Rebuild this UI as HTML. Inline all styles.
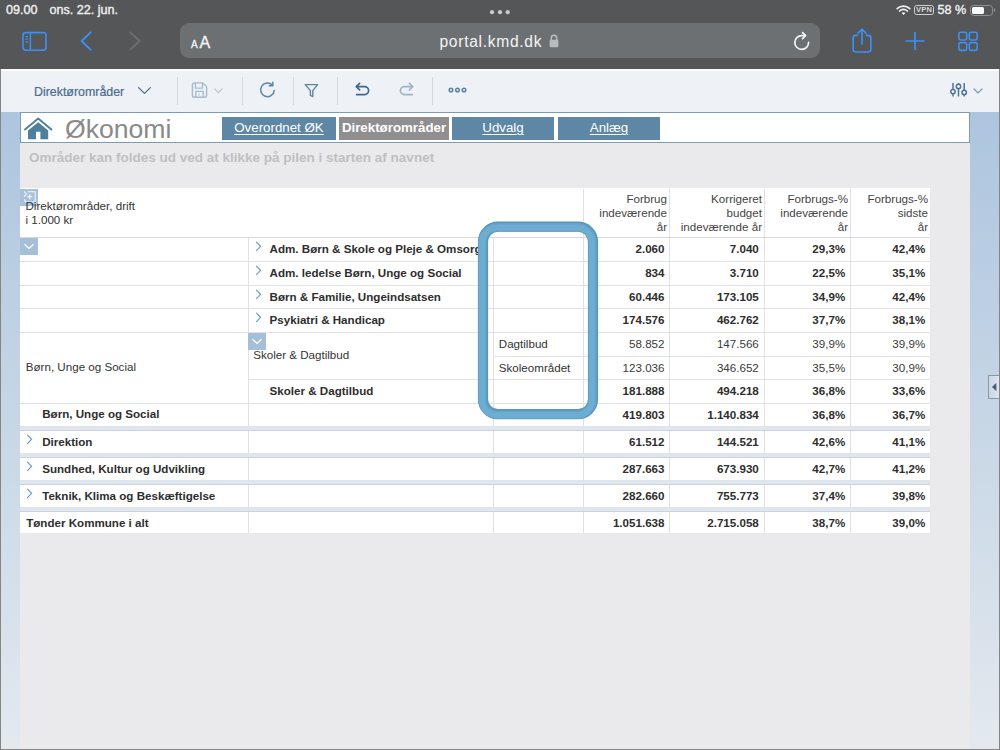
<!DOCTYPE html>
<html><head><meta charset="utf-8">
<style>
*{box-sizing:border-box}
html,body{margin:0;padding:0}
body{width:1000px;height:750px;overflow:hidden;position:relative;background:#545658;font-family:"Liberation Sans",sans-serif}
.a{position:absolute}
.t{position:absolute;white-space:nowrap;line-height:14px}
.st{position:absolute;color:#f2f2f2;font-size:12.6px;top:3px;line-height:14px;white-space:nowrap;-webkit-text-stroke:0.35px #f2f2f2}
#url{left:180px;top:23px;width:640px;height:35px;border-radius:9px;background:#6d7072}
#web{left:0;top:69px;width:1000px;height:681px;background:#eef2f7;border-left:1px solid #858585;border-right:1px solid #858585;border-bottom:1px solid #858585}
#tbl{left:1px;top:69px;width:998px;height:2px;background:#f9fbfd}
.sep{position:absolute;top:77px;width:1px;height:28px;background:#d3d9e1}
#lsb{left:1px;top:112px;width:19px;height:637px;background:linear-gradient(#adc5df,#c5d5e5 45%,#e3e9ef)}
#rsb{left:970px;top:112px;width:29px;height:637px;background:linear-gradient(#adc5df,#c5d5e5 45%,#e3e9ef)}
#main{left:20px;top:112px;width:950px;height:637px;background:#eaeaec}
#hdr{left:20px;top:112px;width:950px;height:31px;background:#fff;border:1.6px solid #7b9cb6}
.tab{position:absolute;top:117px;height:23px;background:#5e87a5;color:#fff;font-size:13.3px;text-align:center;line-height:22px;white-space:nowrap}
.tab u{text-decoration:underline;text-underline-offset:2px;text-decoration-thickness:1px}
#ins{left:29px;top:149.6px;color:#bfbfc1;font-size:13.5px;font-weight:bold;white-space:nowrap;line-height:16px}
</style></head><body>
<div class="st" style="left:6px">09.00</div>
<div class="st" style="left:49.5px">ons. 22. jun.</div>
<div class="st" style="left:937.5px">58 %</div>
<div id="url" class="a"></div>
<div class="a" style="left:439.5px;top:32px;color:#f4f4f4;font-size:15.6px;line-height:20px;white-space:nowrap;letter-spacing:0.7px">portal.kmd.dk</div>

<div id="web" class="a"></div>
<div id="tbl" class="a"></div>
<div class="a" style="left:34px;top:83.5px;color:#4a6c8e;font-size:12.4px;line-height:16px;-webkit-text-stroke:0.2px #4a6c8e">Direktørområder</div>
<div class="sep" style="left:177px"></div>
<div class="sep" style="left:242px"></div>
<div class="sep" style="left:293px"></div>
<div class="sep" style="left:337px"></div>
<div class="sep" style="left:432px"></div>
<div id="lsb" class="a"></div>
<div id="rsb" class="a"></div>
<div id="main" class="a"></div>
<div id="hdr" class="a"></div>
<div class="a" style="left:65px;top:114px;color:#8a8a8a;font-size:26.6px;line-height:30px">Økonomi</div>
<div class="tab" style="left:222px;width:114px"><u>Overordnet ØK</u></div>
<div class="tab" style="left:339px;width:110px;background:#8f8f8f;font-weight:bold">Direktørområder</div>
<div class="tab" style="left:452px;width:102px"><u>Udvalg</u></div>
<div class="tab" style="left:558px;width:102px"><u>Anlæg</u></div>
<div id="ins" class="a">Områder kan foldes ud ved at klikke på pilen i starten af navnet</div>

<!-- status bar extras -->
<svg class="a" style="left:488px;top:8px" width="24" height="8" viewBox="0 0 24 8"><circle cx="4" cy="4.2" r="2.1" fill="#c9cacb"/><circle cx="12" cy="4.2" r="2.1" fill="#c9cacb"/><circle cx="19.7" cy="4.2" r="2.1" fill="#c9cacb"/></svg>
<svg class="a" style="left:896px;top:4px" width="15" height="12" viewBox="0 0 15 12"><path d="M1.2 4.6 A9 9 0 0 1 13.8 4.6" fill="none" stroke="#f2f2f2" stroke-width="1.7" stroke-linecap="round"/><path d="M3.6 7 A5.6 5.6 0 0 1 11.4 7" fill="none" stroke="#f2f2f2" stroke-width="1.7" stroke-linecap="round"/><path d="M5.6 9.1 L7.5 11.1 L9.4 9.1 A2.7 2.7 0 0 0 5.6 9.1Z" fill="#f2f2f2"/></svg>
<div class="a" style="left:914px;top:5px;width:20px;height:10px;border:1.2px solid #d0d0d0;border-radius:2.5px"></div>
<div class="a" style="left:914px;top:5px;width:20px;line-height:10px;font-size:7.5px;font-weight:bold;color:#d8d8d8;text-align:center;letter-spacing:0.2px">VPN</div>
<div class="a" style="left:969.5px;top:4.5px;width:23px;height:11px;border:1.2px solid #8e9091;border-radius:3.5px"></div>
<div class="a" style="left:971.5px;top:6.5px;width:12px;height:7px;background:#fafafa;border-radius:1.5px"></div>
<div class="a" style="left:993.5px;top:8.3px;width:1.5px;height:3.8px;background:#8e9091;border-radius:0 1px 1px 0"></div>
<!-- safari bar icons -->
<svg class="a" style="left:20px;top:30px" width="30" height="24" viewBox="0 0 30 24"><rect x="3" y="2.6" width="23" height="17.6" rx="2.6" fill="none" stroke="#3f8ef2" stroke-width="1.6"/><path d="M10.4 2.6 V20.2" stroke="#3f8ef2" stroke-width="1.5"/><path d="M5.5 6.6 H8 M5.5 9.2 H8 M5.5 11.8 H8" stroke="#3f8ef2" stroke-width="1.2"/></svg>
<svg class="a" style="left:78px;top:30px" width="16" height="22" viewBox="0 0 16 22"><path d="M12.6 2.4 L3.6 11 L12.6 19.6" fill="none" stroke="#3f8ef2" stroke-width="2" stroke-linecap="round" stroke-linejoin="round"/></svg>
<svg class="a" style="left:127px;top:30px" width="16" height="22" viewBox="0 0 16 22"><path d="M3.4 2.4 L12.4 11 L3.4 19.6" fill="none" stroke="#6c6e70" stroke-width="2" stroke-linecap="round" stroke-linejoin="round"/></svg>
<div class="a" style="left:191px;top:38.5px;font-size:10px;line-height:12px;color:#f5f5f5;-webkit-text-stroke:0.3px #f5f5f5">A</div>
<div class="a" style="left:199.5px;top:33.5px;font-size:16px;line-height:18px;color:#f5f5f5;-webkit-text-stroke:0.3px #f5f5f5">A</div>
<svg class="a" style="left:548px;top:33px" width="12" height="16" viewBox="0 0 12 16"><path d="M3.3 7 V5 A2.7 2.7 0 0 1 8.7 5 V7" fill="none" stroke="#b9babd" stroke-width="1.5"/><rect x="1.6" y="6.8" width="8.8" height="7.4" rx="1.3" fill="#b9babd"/></svg>
<svg class="a" style="left:793px;top:30px" width="20" height="22" viewBox="0 0 20 22"><path d="M15.6 12.3 A6.9 6.9 0 1 1 9.2 5.6 L11.8 5.6" fill="none" stroke="#f4f4f4" stroke-width="1.7" stroke-linecap="round"/><path d="M9.6 2.6 L12.6 5.6 L9.6 8.6" fill="none" stroke="#f4f4f4" stroke-width="1.7" stroke-linecap="round" stroke-linejoin="round"/></svg>
<svg class="a" style="left:850px;top:27px" width="24" height="28" viewBox="0 0 24 28"><path d="M8.2 8.4 H5.6 A2.4 2.4 0 0 0 3.2 10.8 V22.6 A2.4 2.4 0 0 0 5.6 25 H18.4 A2.4 2.4 0 0 0 20.8 22.6 V10.8 A2.4 2.4 0 0 0 18.4 8.4 H15.8" fill="none" stroke="#3f8ef2" stroke-width="1.7"/><path d="M12 17 V2.6 M8 6.2 L12 2.2 L16 6.2" fill="none" stroke="#3f8ef2" stroke-width="1.7" stroke-linecap="round" stroke-linejoin="round"/></svg>
<svg class="a" style="left:904px;top:30px" width="22" height="22" viewBox="0 0 22 22"><path d="M11 2.5 V19.5 M2.2 11 H19.8" stroke="#3f8ef2" stroke-width="1.7" stroke-linecap="round"/></svg>
<svg class="a" style="left:956px;top:29px" width="24" height="24" viewBox="0 0 24 24"><rect x="2.9" y="3.2" width="7.8" height="7.8" rx="1.6" fill="none" stroke="#3f8ef2" stroke-width="1.6"/><rect x="13.3" y="3.2" width="7.8" height="7.8" rx="1.6" fill="none" stroke="#3f8ef2" stroke-width="1.6"/><rect x="2.9" y="13.6" width="7.8" height="7.8" rx="1.6" fill="none" stroke="#3f8ef2" stroke-width="1.6"/><rect x="13.3" y="13.6" width="7.8" height="7.8" rx="1.6" fill="none" stroke="#3f8ef2" stroke-width="1.6"/></svg>

<!-- toolbar icons -->
<svg class="a" style="left:136px;top:84px" width="17" height="12" viewBox="0 0 17 12"><path d="M2.6 3.6 L8.5 9.4 L14.4 3.6" fill="none" stroke="#4a6c8e" stroke-width="1.3" stroke-linecap="round" stroke-linejoin="round"/></svg>
<svg class="a" style="left:190px;top:81px" width="19" height="18" viewBox="0 0 19 18"><path d="M4.6 1.9 H12.6 L16.6 5.6 V14.4 A1.8 1.8 0 0 1 14.8 16.2 H4.2 A1.8 1.8 0 0 1 2.4 14.4 V3.7 A1.8 1.8 0 0 1 4.2 1.9Z" fill="none" stroke="#a7b9cf" stroke-width="1.4"/><path d="M5.4 2 V7.2 H12.4 V2" fill="none" stroke="#a7b9cf" stroke-width="1.3"/><path d="M5.8 16.2 V10.4 H13.2 V16.2" fill="none" stroke="#a7b9cf" stroke-width="1.3"/><path d="M9 12.6 V14.6" stroke="#a7b9cf" stroke-width="1"/></svg>
<svg class="a" style="left:213px;top:87px" width="11" height="8" viewBox="0 0 11 8"><path d="M1.8 1.8 L5.5 5.6 L9.2 1.8" fill="none" stroke="#b3c2d3" stroke-width="1.1" stroke-linecap="round"/></svg>
<svg class="a" style="left:258px;top:80px" width="19" height="20" viewBox="0 0 19 20"><path d="M14.4 5.2 A6.8 6.8 0 1 0 16.2 10.6" fill="none" stroke="#5d84a9" stroke-width="1.5" stroke-linecap="round"/><path d="M14.8 2.2 V5.8 H11.2" fill="none" stroke="#5d84a9" stroke-width="1.5" stroke-linecap="round" stroke-linejoin="round"/></svg>
<svg class="a" style="left:303px;top:82px" width="17" height="17" viewBox="0 0 17 17"><path d="M2.2 2.6 H14.6 L9.8 8.6 V14.6 L7.4 13.4 V8.6 Z" fill="none" stroke="#5d84a9" stroke-width="1.4" stroke-linejoin="round"/></svg>
<svg class="a" style="left:354px;top:81px" width="18" height="18" viewBox="0 0 18 18"><path d="M5.6 2.3 L2.3 5.6 L5.6 8.9" fill="none" stroke="#3b6893" stroke-width="1.7" stroke-linecap="round" stroke-linejoin="round"/><path d="M2.6 5.6 H10.6 A4 4 0 0 1 10.6 13.6 H2.6" fill="none" stroke="#3b6893" stroke-width="1.7" stroke-linecap="round"/><path d="M2.4 15.2 H12.4" stroke="#3b6893" stroke-width="0" /></svg>
<svg class="a" style="left:397px;top:81px" width="18" height="18" viewBox="0 0 18 18"><path d="M12.4 2.3 L15.7 5.6 L12.4 8.9" fill="none" stroke="#9cb4cb" stroke-width="1.7" stroke-linecap="round" stroke-linejoin="round"/><path d="M15.4 5.6 H7.4 A4 4 0 0 0 7.4 13.6 H15.4" fill="none" stroke="#9cb4cb" stroke-width="1.7" stroke-linecap="round"/></svg>
<svg class="a" style="left:447px;top:85px" width="21" height="10" viewBox="0 0 21 10"><circle cx="4" cy="5" r="1.8" fill="none" stroke="#5a80a5" stroke-width="1.5"/><circle cx="10.5" cy="5" r="1.8" fill="none" stroke="#5a80a5" stroke-width="1.5"/><circle cx="17" cy="5" r="1.8" fill="none" stroke="#5a80a5" stroke-width="1.5"/></svg>
<svg class="a" style="left:948px;top:81px" width="21" height="18" viewBox="0 0 21 18"><path d="M5 2 V15.6 M10.5 2 V15.6 M16.2 2 V15.6" stroke="#4d7399" stroke-width="1.5"/><circle cx="5" cy="10.6" r="2.2" fill="#eef2f7" stroke="#4d7399" stroke-width="1.5"/><circle cx="10.5" cy="5.5" r="2.2" fill="#eef2f7" stroke="#4d7399" stroke-width="1.5"/><circle cx="16.2" cy="11.5" r="2.2" fill="#eef2f7" stroke="#4d7399" stroke-width="1.5"/></svg>
<svg class="a" style="left:972px;top:86px" width="12" height="9" viewBox="0 0 12 9"><path d="M2 3 L6 7 L10 3" fill="none" stroke="#7b97b4" stroke-width="1.2" stroke-linecap="round"/></svg>
<!-- house -->
<svg class="a" style="left:22px;top:114px" width="34" height="28" viewBox="22 114 34 28"><path d="M25 129.6 L38.2 118.6 L51.4 129.6" fill="none" stroke="#4e7f9c" stroke-width="1.9" stroke-linecap="round" stroke-linejoin="round"/><path d="M28 130.4 L38.2 122.2 L48.2 130.4 V139.2 H40.4 V131.8 H36 V139.2 H28Z" fill="#4e7f9c"/></svg>
<!-- right sidebar handle -->
<div class="a" style="left:988px;top:375px;width:11px;height:24px;background:linear-gradient(90deg,#c9d6e4,#dfe7ef);border:1px solid #8b98a6;border-right:none"></div>
<svg class="a" style="left:988px;top:375px" width="11" height="24" viewBox="0 0 11 24"><path d="M4 12 L8.4 7.8 V16.2Z" fill="#4a5a70"/></svg>
<div class="a" style="left:20px;top:188px;width:910px;height:345px;background:#fff"></div>
<div class="a" style="left:20px;top:189px;width:18px;height:17px;background:#a8c1db"></div><svg class="a" style="left:20px;top:189px" width="18" height="17" viewBox="0 0 18 17"><path d="M4 2.4 L6.6 5 L4 7.6" fill="none" stroke="#eef3f8" stroke-width="1.1"/><path d="M7.6 2.8 H15.2 V13 H7.4 M4.6 10.2 A2.8 2.8 0 0 0 7.4 13" fill="none" stroke="#eef3f8" stroke-width="1.1"/><path d="M9.7 5.2 V10.2 M7.2 7.7 H12.2" stroke="#eef3f8" stroke-width="1.3"/></svg>
<div class="a" style="left:583px;top:189px;width:1px;height:48px;background:#e1e1e1"></div>
<div class="a" style="left:669px;top:189px;width:1px;height:48px;background:#e1e1e1"></div>
<div class="a" style="left:764px;top:189px;width:1px;height:48px;background:#e1e1e1"></div>
<div class="a" style="left:850px;top:189px;width:1px;height:48px;background:#e1e1e1"></div>
<div class="t" style="left:25.5px;top:198.6px;font-size:11.6px;color:#333;">Direktørområder, drift</div>
<div class="t" style="left:25.5px;top:212.8px;font-size:11.6px;color:#333;">i 1.000 kr</div>
<div class="t" style="left:572px;width:95px;text-align:right;top:192.1px;font-size:11.6px;color:#444;">Forbrug</div>
<div class="t" style="left:572px;width:95px;text-align:right;top:206.1px;font-size:11.6px;color:#444;">indeværende</div>
<div class="t" style="left:572px;width:95px;text-align:right;top:220.1px;font-size:11.6px;color:#444;">år</div>
<div class="t" style="left:667px;width:95px;text-align:right;top:192.1px;font-size:11.6px;color:#444;">Korrigeret</div>
<div class="t" style="left:667px;width:95px;text-align:right;top:206.1px;font-size:11.6px;color:#444;">budget</div>
<div class="t" style="left:667px;width:95px;text-align:right;top:220.1px;font-size:11.6px;color:#444;">indeværende år</div>
<div class="t" style="left:753px;width:95px;text-align:right;top:192.1px;font-size:11.6px;color:#444;">Forbrugs-%</div>
<div class="t" style="left:753px;width:95px;text-align:right;top:206.1px;font-size:11.6px;color:#444;">indeværende</div>
<div class="t" style="left:753px;width:95px;text-align:right;top:220.1px;font-size:11.6px;color:#444;">år</div>
<div class="t" style="left:833px;width:95px;text-align:right;top:192.1px;font-size:11.6px;color:#444;">Forbrugs-%</div>
<div class="t" style="left:833px;width:95px;text-align:right;top:206.1px;font-size:11.6px;color:#444;">sidste</div>
<div class="t" style="left:833px;width:95px;text-align:right;top:220.1px;font-size:11.6px;color:#444;">år</div>
<div class="a" style="left:20px;top:237px;width:910px;height:1px;background:#d9d7e7"></div>
<div class="a" style="left:20px;top:261px;width:910px;height:1px;background:#e1e1e1"></div>
<div class="a" style="left:20px;top:285px;width:910px;height:1px;background:#e1e1e1"></div>
<div class="a" style="left:20px;top:308px;width:910px;height:1px;background:#e1e1e1"></div>
<div class="a" style="left:20px;top:332px;width:910px;height:1px;background:#e1e1e1"></div>
<div class="a" style="left:493px;top:356px;width:437px;height:1px;background:#e1e1e1"></div>
<div class="a" style="left:248px;top:379px;width:682px;height:1px;background:#e1e1e1"></div>
<div class="a" style="left:20px;top:403px;width:910px;height:1px;background:#e1e1e1"></div>
<div class="a" style="left:248px;top:238px;width:1px;height:189px;background:#e1e1e1"></div>
<div class="a" style="left:493px;top:238px;width:1px;height:189px;background:#e1e1e1"></div>
<div class="a" style="left:583px;top:238px;width:1px;height:189px;background:#e1e1e1"></div>
<div class="a" style="left:669px;top:238px;width:1px;height:189px;background:#e1e1e1"></div>
<div class="a" style="left:764px;top:238px;width:1px;height:189px;background:#e1e1e1"></div>
<div class="a" style="left:850px;top:238px;width:1px;height:189px;background:#e1e1e1"></div>
<svg class="a" style="left:254.5px;top:241px" width="7" height="11" viewBox="0 0 7 11"><path d="M1.2 0.8 L5.6 5.3 L1.2 9.8" fill="none" stroke="#6d9bc6" stroke-width="1.2"/></svg>
<div class="t" style="left:269.6px;top:242.0px;font-size:11.6px;color:#2e2e2e;font-weight:bold;">Adm. Børn &amp; Skole og Pleje &amp; Omsorg</div>
<svg class="a" style="left:254.5px;top:265px" width="7" height="11" viewBox="0 0 7 11"><path d="M1.2 0.8 L5.6 5.3 L1.2 9.8" fill="none" stroke="#6d9bc6" stroke-width="1.2"/></svg>
<div class="t" style="left:269.6px;top:266.0px;font-size:11.6px;color:#2e2e2e;font-weight:bold;">Adm. ledelse Børn, Unge og Social</div>
<svg class="a" style="left:254.5px;top:289px" width="7" height="11" viewBox="0 0 7 11"><path d="M1.2 0.8 L5.6 5.3 L1.2 9.8" fill="none" stroke="#6d9bc6" stroke-width="1.2"/></svg>
<div class="t" style="left:269.6px;top:290.0px;font-size:11.6px;color:#2e2e2e;font-weight:bold;">Børn &amp; Familie, Ungeindsatsen</div>
<svg class="a" style="left:254.5px;top:312px" width="7" height="11" viewBox="0 0 7 11"><path d="M1.2 0.8 L5.6 5.3 L1.2 9.8" fill="none" stroke="#6d9bc6" stroke-width="1.2"/></svg>
<div class="t" style="left:269.6px;top:313.0px;font-size:11.6px;color:#2e2e2e;font-weight:bold;">Psykiatri &amp; Handicap</div>
<div class="a" style="left:20px;top:238px;width:18px;height:17px;background:#a6bfd8"></div><svg class="a" style="left:20px;top:238px" width="18" height="17" viewBox="0 0 18 17"><path d="M4.5 6.2 L9 10.4 L13.5 6.2" fill="none" stroke="#fff" stroke-width="1.2"/></svg>
<div class="a" style="left:248px;top:333px;width:18px;height:17px;background:#a6bfd8"></div><svg class="a" style="left:248px;top:333px" width="18" height="17" viewBox="0 0 18 17"><path d="M4.5 6.2 L9 10.4 L13.5 6.2" fill="none" stroke="#fff" stroke-width="1.2"/></svg>
<div class="t" style="left:25.8px;top:360.0px;font-size:11.6px;color:#333;">Børn, Unge og Social</div>
<div class="t" style="left:253.2px;top:348.2px;font-size:11.6px;color:#333;">Skoler &amp; Dagtilbud</div>
<div class="t" style="left:269.6px;top:384.4px;font-size:11.6px;color:#2e2e2e;font-weight:bold;">Skoler &amp; Dagtilbud</div>
<div class="t" style="left:42.2px;top:407.4px;font-size:11.6px;color:#2e2e2e;font-weight:bold;">Børn, Unge og Social</div>
<div class="t" style="left:498.8px;top:336.9px;font-size:11.6px;color:#333;">Dagtilbud</div>
<div class="t" style="left:498.8px;top:361.0px;font-size:11.6px;color:#333;">Skoleområdet</div>
<div class="t" style="left:579.5px;width:85px;text-align:right;top:241.6px;font-size:11.6px;color:#2e2e2e;font-weight:bold;">2.060</div>
<div class="t" style="left:673.8px;width:85px;text-align:right;top:241.6px;font-size:11.6px;color:#2e2e2e;font-weight:bold;">7.040</div>
<div class="t" style="left:760.2px;width:85px;text-align:right;top:241.6px;font-size:11.6px;color:#2e2e2e;font-weight:bold;">29,3%</div>
<div class="t" style="left:840.2px;width:85px;text-align:right;top:241.6px;font-size:11.6px;color:#2e2e2e;font-weight:bold;">42,4%</div>
<div class="t" style="left:579.5px;width:85px;text-align:right;top:265.6px;font-size:11.6px;color:#2e2e2e;font-weight:bold;">834</div>
<div class="t" style="left:673.8px;width:85px;text-align:right;top:265.6px;font-size:11.6px;color:#2e2e2e;font-weight:bold;">3.710</div>
<div class="t" style="left:760.2px;width:85px;text-align:right;top:265.6px;font-size:11.6px;color:#2e2e2e;font-weight:bold;">22,5%</div>
<div class="t" style="left:840.2px;width:85px;text-align:right;top:265.6px;font-size:11.6px;color:#2e2e2e;font-weight:bold;">35,1%</div>
<div class="t" style="left:579.5px;width:85px;text-align:right;top:289.6px;font-size:11.6px;color:#2e2e2e;font-weight:bold;">60.446</div>
<div class="t" style="left:673.8px;width:85px;text-align:right;top:289.6px;font-size:11.6px;color:#2e2e2e;font-weight:bold;">173.105</div>
<div class="t" style="left:760.2px;width:85px;text-align:right;top:289.6px;font-size:11.6px;color:#2e2e2e;font-weight:bold;">34,9%</div>
<div class="t" style="left:840.2px;width:85px;text-align:right;top:289.6px;font-size:11.6px;color:#2e2e2e;font-weight:bold;">42,4%</div>
<div class="t" style="left:579.5px;width:85px;text-align:right;top:312.6px;font-size:11.6px;color:#2e2e2e;font-weight:bold;">174.576</div>
<div class="t" style="left:673.8px;width:85px;text-align:right;top:312.6px;font-size:11.6px;color:#2e2e2e;font-weight:bold;">462.762</div>
<div class="t" style="left:760.2px;width:85px;text-align:right;top:312.6px;font-size:11.6px;color:#2e2e2e;font-weight:bold;">37,7%</div>
<div class="t" style="left:840.2px;width:85px;text-align:right;top:312.6px;font-size:11.6px;color:#2e2e2e;font-weight:bold;">38,1%</div>
<div class="t" style="left:579.5px;width:85px;text-align:right;top:336.6px;font-size:11.6px;color:#3a3a3a;">58.852</div>
<div class="t" style="left:673.8px;width:85px;text-align:right;top:336.6px;font-size:11.6px;color:#3a3a3a;">147.566</div>
<div class="t" style="left:760.2px;width:85px;text-align:right;top:336.6px;font-size:11.6px;color:#3a3a3a;">39,9%</div>
<div class="t" style="left:840.2px;width:85px;text-align:right;top:336.6px;font-size:11.6px;color:#3a3a3a;">39,9%</div>
<div class="t" style="left:579.5px;width:85px;text-align:right;top:360.6px;font-size:11.6px;color:#3a3a3a;">123.036</div>
<div class="t" style="left:673.8px;width:85px;text-align:right;top:360.6px;font-size:11.6px;color:#3a3a3a;">346.652</div>
<div class="t" style="left:760.2px;width:85px;text-align:right;top:360.6px;font-size:11.6px;color:#3a3a3a;">35,5%</div>
<div class="t" style="left:840.2px;width:85px;text-align:right;top:360.6px;font-size:11.6px;color:#3a3a3a;">30,9%</div>
<div class="t" style="left:579.5px;width:85px;text-align:right;top:383.6px;font-size:11.6px;color:#2e2e2e;font-weight:bold;">181.888</div>
<div class="t" style="left:673.8px;width:85px;text-align:right;top:383.6px;font-size:11.6px;color:#2e2e2e;font-weight:bold;">494.218</div>
<div class="t" style="left:760.2px;width:85px;text-align:right;top:383.6px;font-size:11.6px;color:#2e2e2e;font-weight:bold;">36,8%</div>
<div class="t" style="left:840.2px;width:85px;text-align:right;top:383.6px;font-size:11.6px;color:#2e2e2e;font-weight:bold;">33,6%</div>
<div class="t" style="left:579.5px;width:85px;text-align:right;top:407.6px;font-size:11.6px;color:#2e2e2e;font-weight:bold;">419.803</div>
<div class="t" style="left:673.8px;width:85px;text-align:right;top:407.6px;font-size:11.6px;color:#2e2e2e;font-weight:bold;">1.140.834</div>
<div class="t" style="left:760.2px;width:85px;text-align:right;top:407.6px;font-size:11.6px;color:#2e2e2e;font-weight:bold;">36,8%</div>
<div class="t" style="left:840.2px;width:85px;text-align:right;top:407.6px;font-size:11.6px;color:#2e2e2e;font-weight:bold;">36,7%</div>
<div class="a" style="left:20px;top:426px;width:910px;height:1px;background:#e3e3e6"></div>
<div class="a" style="left:20px;top:427px;width:910px;height:3px;background:#dde7ef"></div>
<div class="a" style="left:20px;top:430px;width:910px;height:1px;background:#cfd0e1"></div>
<div class="a" style="left:20px;top:453px;width:910px;height:1px;background:#e3e3e6"></div>
<div class="a" style="left:20px;top:454px;width:910px;height:3px;background:#dde7ef"></div>
<div class="a" style="left:20px;top:457px;width:910px;height:1px;background:#cfd0e1"></div>
<div class="a" style="left:248px;top:431px;width:1px;height:22px;background:#e1e1e1"></div>
<div class="a" style="left:493px;top:431px;width:1px;height:22px;background:#e1e1e1"></div>
<div class="a" style="left:583px;top:431px;width:1px;height:22px;background:#e1e1e1"></div>
<div class="a" style="left:669px;top:431px;width:1px;height:22px;background:#e1e1e1"></div>
<div class="a" style="left:764px;top:431px;width:1px;height:22px;background:#e1e1e1"></div>
<div class="a" style="left:850px;top:431px;width:1px;height:22px;background:#e1e1e1"></div>
<svg class="a" style="left:26px;top:434px" width="7" height="11" viewBox="0 0 7 11"><path d="M1.2 0.8 L5.6 5.3 L1.2 9.8" fill="none" stroke="#6d9bc6" stroke-width="1.2"/></svg>
<div class="t" style="left:42.2px;top:434.5px;font-size:11.6px;color:#2e2e2e;font-weight:bold;">Direktion</div>
<div class="t" style="left:579.5px;width:85px;text-align:right;top:434.5px;font-size:11.6px;color:#2e2e2e;font-weight:bold;">61.512</div>
<div class="t" style="left:673.8px;width:85px;text-align:right;top:434.5px;font-size:11.6px;color:#2e2e2e;font-weight:bold;">144.521</div>
<div class="t" style="left:760.2px;width:85px;text-align:right;top:434.5px;font-size:11.6px;color:#2e2e2e;font-weight:bold;">42,6%</div>
<div class="t" style="left:840.2px;width:85px;text-align:right;top:434.5px;font-size:11.6px;color:#2e2e2e;font-weight:bold;">41,1%</div>
<div class="a" style="left:20px;top:480px;width:910px;height:1px;background:#e3e3e6"></div>
<div class="a" style="left:20px;top:481px;width:910px;height:3px;background:#dde7ef"></div>
<div class="a" style="left:20px;top:484px;width:910px;height:1px;background:#cfd0e1"></div>
<div class="a" style="left:248px;top:458px;width:1px;height:22px;background:#e1e1e1"></div>
<div class="a" style="left:493px;top:458px;width:1px;height:22px;background:#e1e1e1"></div>
<div class="a" style="left:583px;top:458px;width:1px;height:22px;background:#e1e1e1"></div>
<div class="a" style="left:669px;top:458px;width:1px;height:22px;background:#e1e1e1"></div>
<div class="a" style="left:764px;top:458px;width:1px;height:22px;background:#e1e1e1"></div>
<div class="a" style="left:850px;top:458px;width:1px;height:22px;background:#e1e1e1"></div>
<svg class="a" style="left:26px;top:461px" width="7" height="11" viewBox="0 0 7 11"><path d="M1.2 0.8 L5.6 5.3 L1.2 9.8" fill="none" stroke="#6d9bc6" stroke-width="1.2"/></svg>
<div class="t" style="left:42.2px;top:461.5px;font-size:11.6px;color:#2e2e2e;font-weight:bold;">Sundhed, Kultur og Udvikling</div>
<div class="t" style="left:579.5px;width:85px;text-align:right;top:461.5px;font-size:11.6px;color:#2e2e2e;font-weight:bold;">287.663</div>
<div class="t" style="left:673.8px;width:85px;text-align:right;top:461.5px;font-size:11.6px;color:#2e2e2e;font-weight:bold;">673.930</div>
<div class="t" style="left:760.2px;width:85px;text-align:right;top:461.5px;font-size:11.6px;color:#2e2e2e;font-weight:bold;">42,7%</div>
<div class="t" style="left:840.2px;width:85px;text-align:right;top:461.5px;font-size:11.6px;color:#2e2e2e;font-weight:bold;">41,2%</div>
<div class="a" style="left:20px;top:507px;width:910px;height:1px;background:#e3e3e6"></div>
<div class="a" style="left:20px;top:508px;width:910px;height:3px;background:#dde7ef"></div>
<div class="a" style="left:20px;top:511px;width:910px;height:1px;background:#cfd0e1"></div>
<div class="a" style="left:248px;top:485px;width:1px;height:22px;background:#e1e1e1"></div>
<div class="a" style="left:493px;top:485px;width:1px;height:22px;background:#e1e1e1"></div>
<div class="a" style="left:583px;top:485px;width:1px;height:22px;background:#e1e1e1"></div>
<div class="a" style="left:669px;top:485px;width:1px;height:22px;background:#e1e1e1"></div>
<div class="a" style="left:764px;top:485px;width:1px;height:22px;background:#e1e1e1"></div>
<div class="a" style="left:850px;top:485px;width:1px;height:22px;background:#e1e1e1"></div>
<svg class="a" style="left:26px;top:488px" width="7" height="11" viewBox="0 0 7 11"><path d="M1.2 0.8 L5.6 5.3 L1.2 9.8" fill="none" stroke="#6d9bc6" stroke-width="1.2"/></svg>
<div class="t" style="left:42.2px;top:488.5px;font-size:11.6px;color:#2e2e2e;font-weight:bold;">Teknik, Klima og Beskæftigelse</div>
<div class="t" style="left:579.5px;width:85px;text-align:right;top:488.5px;font-size:11.6px;color:#2e2e2e;font-weight:bold;">282.660</div>
<div class="t" style="left:673.8px;width:85px;text-align:right;top:488.5px;font-size:11.6px;color:#2e2e2e;font-weight:bold;">755.773</div>
<div class="t" style="left:760.2px;width:85px;text-align:right;top:488.5px;font-size:11.6px;color:#2e2e2e;font-weight:bold;">37,4%</div>
<div class="t" style="left:840.2px;width:85px;text-align:right;top:488.5px;font-size:11.6px;color:#2e2e2e;font-weight:bold;">39,8%</div>
<div class="a" style="left:248px;top:512px;width:1px;height:21px;background:#e1e1e1"></div>
<div class="a" style="left:493px;top:512px;width:1px;height:21px;background:#e1e1e1"></div>
<div class="a" style="left:583px;top:512px;width:1px;height:21px;background:#e1e1e1"></div>
<div class="a" style="left:669px;top:512px;width:1px;height:21px;background:#e1e1e1"></div>
<div class="a" style="left:764px;top:512px;width:1px;height:21px;background:#e1e1e1"></div>
<div class="a" style="left:850px;top:512px;width:1px;height:21px;background:#e1e1e1"></div>
<div class="t" style="left:26.2px;top:515.5px;font-size:11.6px;color:#2e2e2e;font-weight:bold;">Tønder Kommune i alt</div>
<div class="t" style="left:579.5px;width:85px;text-align:right;top:515.5px;font-size:11.6px;color:#2e2e2e;font-weight:bold;">1.051.638</div>
<div class="t" style="left:673.8px;width:85px;text-align:right;top:515.5px;font-size:11.6px;color:#2e2e2e;font-weight:bold;">2.715.058</div>
<div class="t" style="left:760.2px;width:85px;text-align:right;top:515.5px;font-size:11.6px;color:#2e2e2e;font-weight:bold;">38,7%</div>
<div class="t" style="left:840.2px;width:85px;text-align:right;top:515.5px;font-size:11.6px;color:#2e2e2e;font-weight:bold;">39,0%</div>

<svg class="a" style="left:470px;top:212px" width="140" height="220" viewBox="470 212 140 220"><rect x="483" y="226.7" width="110" height="187.5" rx="15" ry="15" fill="none" stroke="#5a96b8" stroke-width="10.2"/><rect x="482.5" y="227.2" width="110" height="187.5" rx="15" ry="15" fill="none" stroke="#64a2c6" stroke-width="8.4"/><rect x="482" y="227.7" width="110" height="187.5" rx="15" ry="15" fill="none" stroke="#6dadd2" stroke-width="6.2"/></svg>

</body></html>
